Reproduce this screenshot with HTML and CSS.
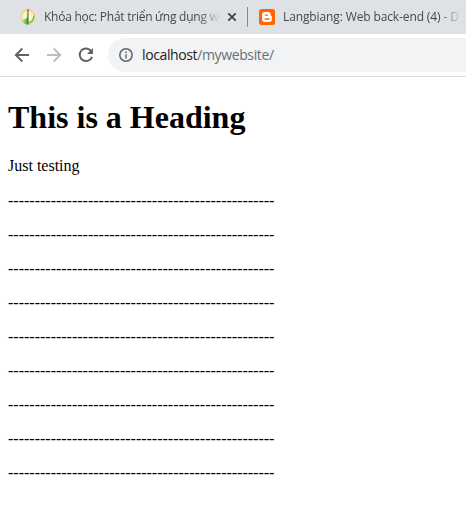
FILE: index.html
```html
<!DOCTYPE html>
<html lang="en">
<head>
<meta charset="utf-8">
<title>localhost/mywebsite/</title>
<link rel="stylesheet" href="styles.css">
</head>
<body>
<div class="tabs">
  <div class="tab tab-course">
    <svg class="favicon" width="16" height="16" viewBox="0 0 16 16">
      <defs>
        <radialGradient id="globe"><stop offset="0" stop-color="#fffef0"/><stop offset=".65" stop-color="#fbf0b8"/><stop offset="1" stop-color="#edca80"/></radialGradient>
        <linearGradient id="leaf"><stop offset="0" stop-color="#f3e795"/><stop offset="1" stop-color="#4fae3c"/></linearGradient>
      </defs>
      <circle cx="8" cy="8" r="7.700" fill="url(#globe)"/>
      <path d="M1.200 10.500Q5 11.500 7.500 8V15.500Q3 14.800 1.200 10.500Z" fill="url(#leaf)"/>
      <path d="M7.400 2.500H8.500L8.700 15.400H6.600Z" fill="#2c9b3c"/>
      <path d="M9 13.800Q13.500 12.500 14 6.500" fill="none" stroke="#64a849" stroke-width="1.200"/>
      <path d="M7.200 0.300H8.800V2.500H7.200Z" fill="#e43b2e"/>
    </svg>
    <span class="title title-course">Khóa học: Phát triển ứng dụng we</span>
    <svg class="close" width="10" height="10" viewBox="0 0 10 10"><path d="M1.300 1.300L8.700 8.700M8.700 1.300L1.300 8.700" stroke="#3c4043" stroke-width="1.700"/></svg>
  </div>
  <div class="divider"></div>
  <div class="tab tab-blog">
    <svg class="favicon" width="16" height="16" viewBox="0 0 16 16">
      <rect width="16" height="16" rx="2.500" fill="#ff6500"/>
      <path d="M6.200 3H8.800Q11.700 3 11.700 6Q11.800 7 12.500 7Q13 7 13 8V10Q13 13 10 13H6Q3 13 3 10V6.200Q3 3 6.200 3Z" fill="#fff"/>
      <path d="M6.200 6.100H8.600M6.200 10H10" stroke="#ff6500" stroke-width="1.300" stroke-linecap="round"/>
    </svg>
    <span class="title title-blog">Langbiang: Web back-end (4) - D</span>
  </div>
</div>
<div class="toolbar">
  <svg class="nav" width="16" height="16" viewBox="0 0 16 16"><path d="M15 8H2.200M8.300 1.500L1.800 8L8.300 14.500" fill="none" stroke="#5f6368" stroke-width="1.900"/></svg>
  <svg class="nav" width="16" height="16" viewBox="0 0 16 16"><path d="M1 8H13.800M7.700 1.500L14.200 8L7.700 14.500" fill="none" stroke="#bbbdbf" stroke-width="1.900"/></svg>
  <svg class="nav" width="16" height="16" viewBox="0 0 16 16"><path d="M13.200 4.100A6.300 6.300 0 1 0 14 9.800" fill="none" stroke="#5f6368" stroke-width="2"/><path d="M15 1V7H9Z" fill="#5f6368"/></svg>
  <div class="address">
    <svg class="info" width="14" height="14" viewBox="0 0 14 14"><circle cx="7" cy="7" r="6.200" fill="none" stroke="#5f6368" stroke-width="1.500"/><path d="M7 6.200V10.500M7 3.500V5" stroke="#5f6368" stroke-width="1.500"/></svg>
    <span class="url"><span class="host">localhost</span>/mywebsite/</span>
  </div>
</div>
<main class="page">
  <h1>This is a Heading</h1>
  <p>Just testing</p>
  <p>--------------------------------------------------</p>
  <p>--------------------------------------------------</p>
  <p>--------------------------------------------------</p>
  <p>--------------------------------------------------</p>
  <p>--------------------------------------------------</p>
  <p>--------------------------------------------------</p>
  <p>--------------------------------------------------</p>
  <p>--------------------------------------------------</p>
  <p>--------------------------------------------------</p>
</main>
</body>
</html>
```
FILE: styles.css
```css
body {
  margin: 0;
  height: 520px;
  overflow: hidden;
  background: #fff;
  color: #000;
  font-family: "Liberation Serif", serif;
  font-size: 16px;
}
svg { display: block; flex: none; }
.tabs {
  display: flex;
  align-items: center;
  height: 34px;
  background: #dee1e6;
  font: 12px/18px "Open Sans", sans-serif;
  color: #45494d;
}
.tab { display: flex; align-items: center; }
.tab-course { width: 227px; padding-left: 20px; }
.tab-blog { padding-left: 11px; }
.title {
  white-space: nowrap;
  margin-left: 8px;
}
.title-course {
  width: 176px;
  letter-spacing: -0.25px;
  -webkit-mask-image: linear-gradient(to right, #000 154px, transparent 177px);
  mask-image: linear-gradient(to right, #000 154px, transparent 177px);
}
.title-blog {
  width: 176px;
  letter-spacing: -0.12px;
  -webkit-mask-image: linear-gradient(to right, #000 156px, transparent 179px);
  mask-image: linear-gradient(to right, #000 156px, transparent 179px);
}
.close { margin-left: 7px; }
.divider { width: 1px; height: 20px; background: #85888c; }
.toolbar {
  display: flex;
  align-items: center;
  height: 42px;
  padding-left: 14px;
  border-bottom: 1px solid #dadce0;
}
.nav { margin-right: 16px; }
.address {
  display: flex;
  align-items: center;
  flex: 1;
  height: 34px;
  margin-left: -2px;
  padding-left: 11px;
  border-radius: 17px 0 0 17px;
  background: #f1f3f4;
}
.url {
  margin-left: 9px;
  font: 14px/20px "Open Sans", sans-serif;
  letter-spacing: -0.38px;
  color: #6b6f73;
  white-space: nowrap;
}
.host { color: #202124; }
.page { display: flow-root; padding: 0 8px; }
h1 { margin: 22px 0 21px; font-size: 32px; line-height: 37px; }
p { margin: 16px 0; line-height: 18px; white-space: nowrap; }
h1 + p { margin: 0 0 17px; }
```
